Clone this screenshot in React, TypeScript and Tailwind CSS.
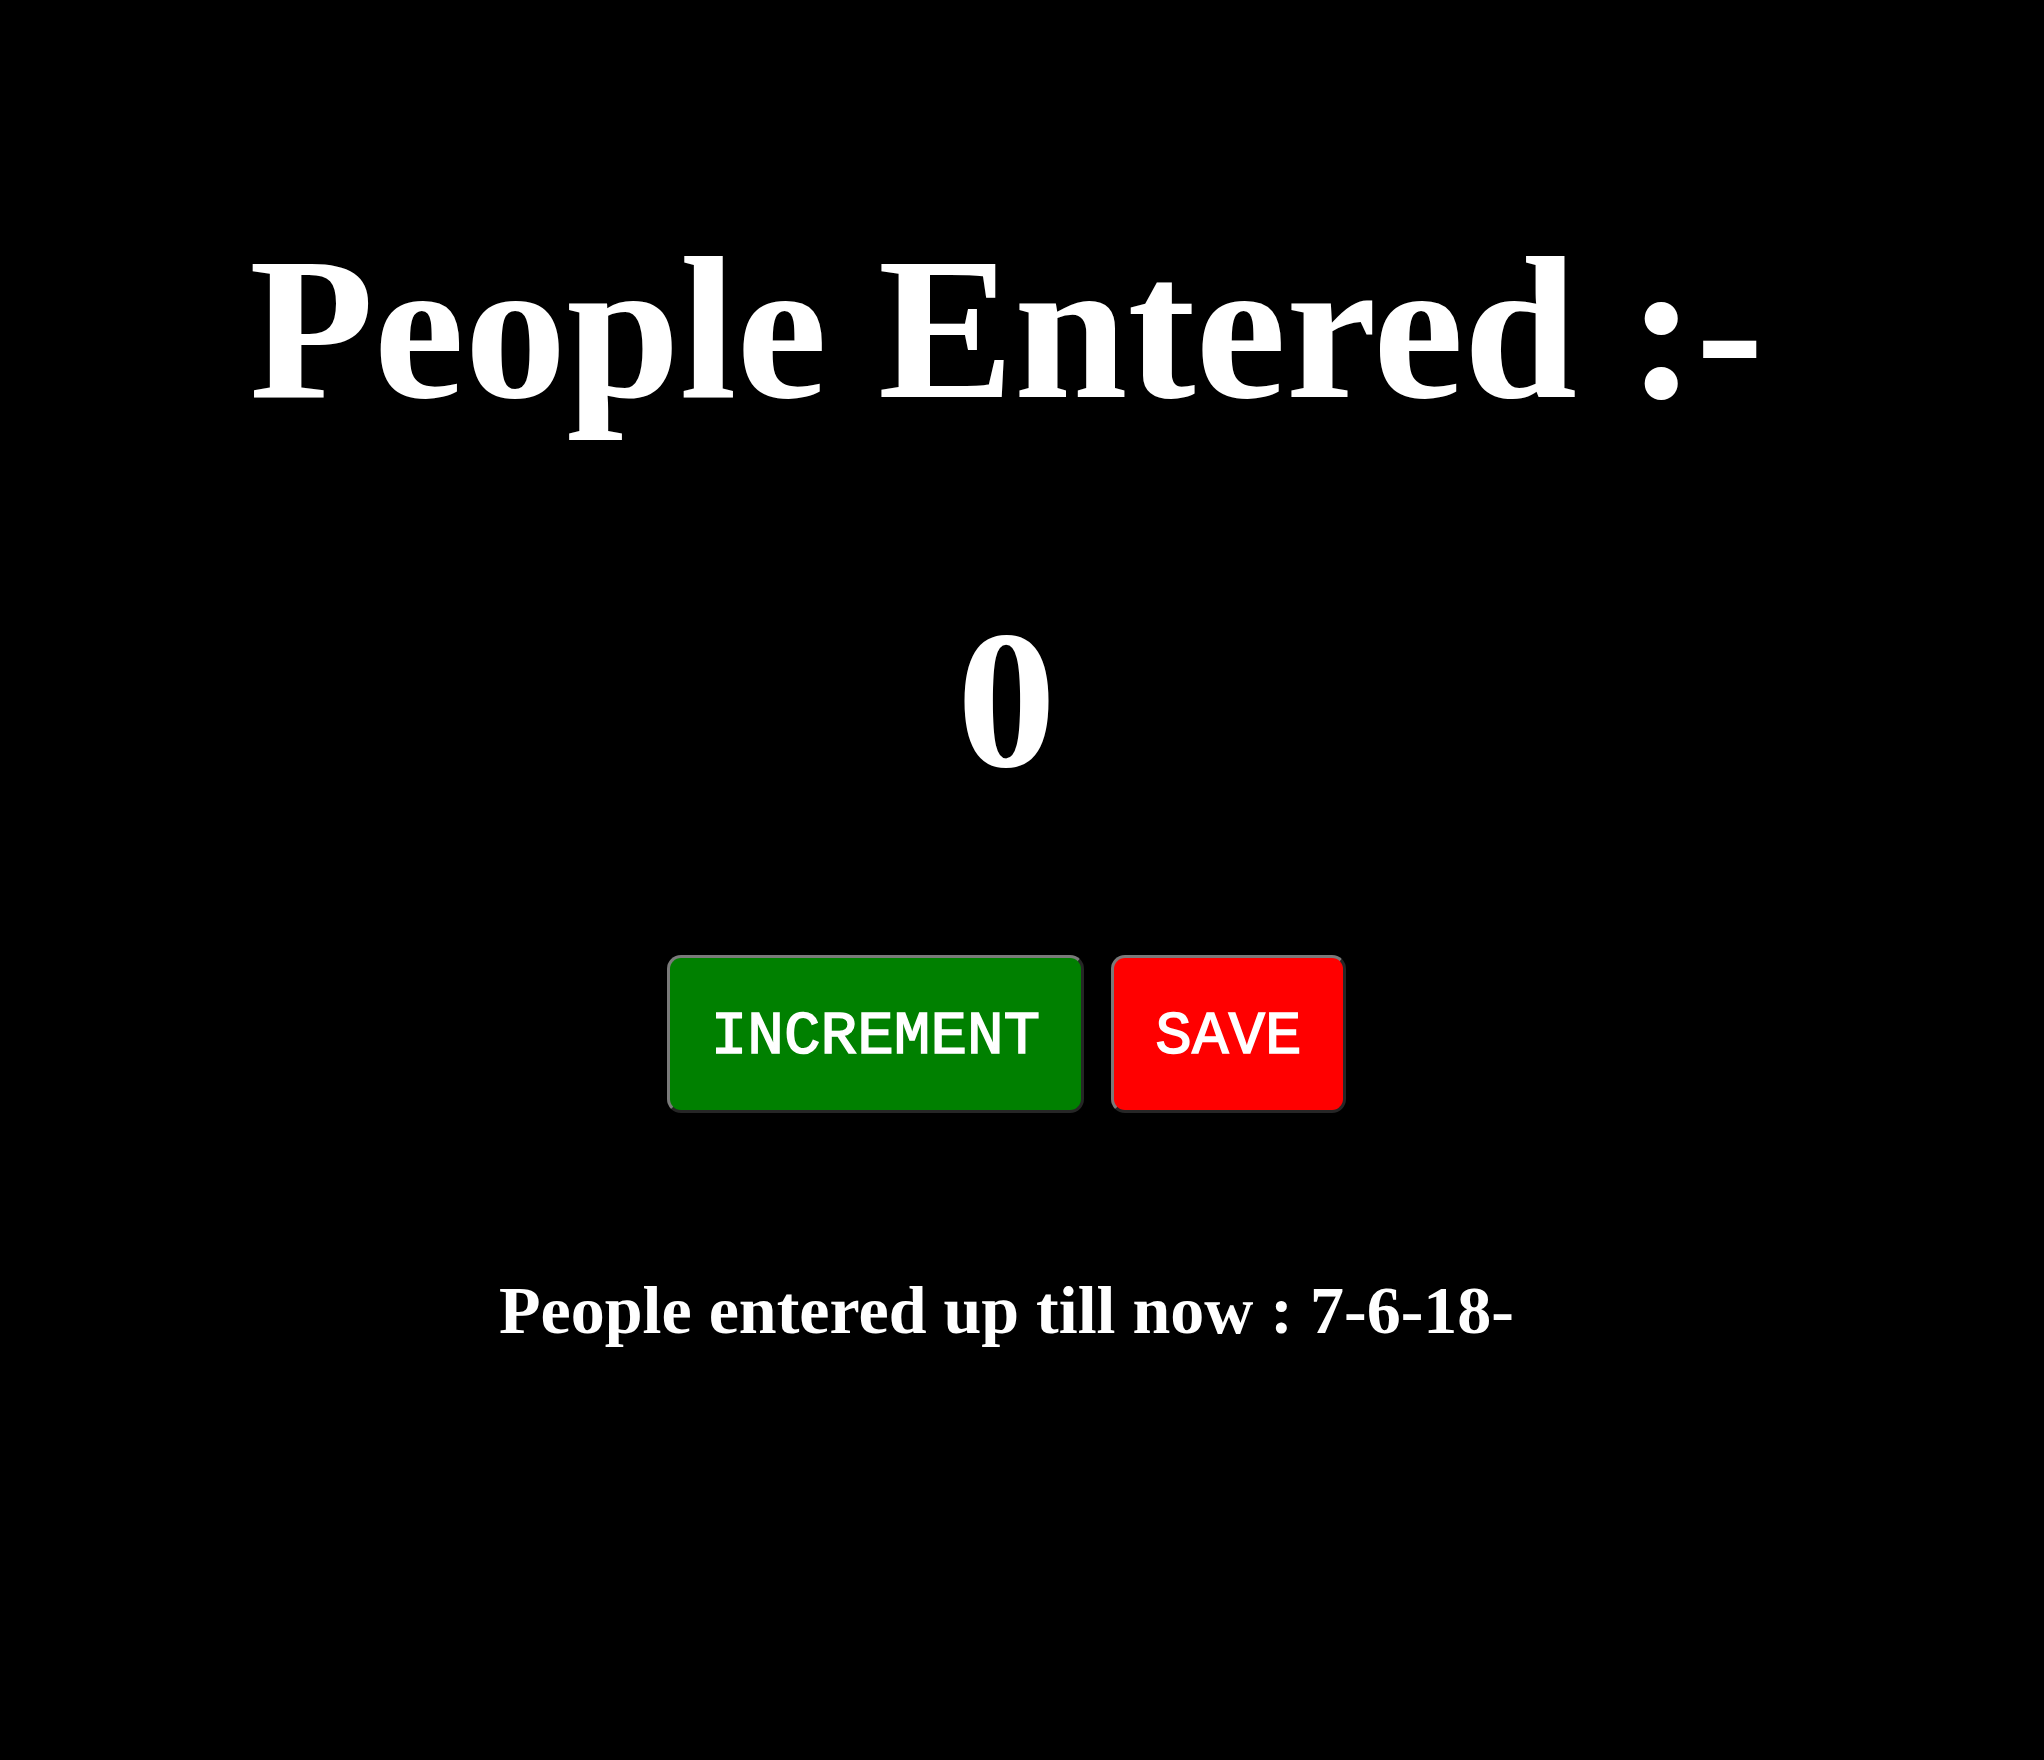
import React from "react";

export default function App() {
  return (
    <div className="min-h-[1760px] w-full bg-black text-white flex flex-col items-center pr-[31px]">
      <h1 className="mt-[226px] text-[204px] leading-none font-bold font-['Liberation_Serif',serif] whitespace-nowrap">
        People Entered :-
      </h1>
      <div className="mt-[171px] text-[198px] leading-none font-bold font-['Liberation_Serif',serif]">
        0
      </div>
      <div className="mt-[156px] flex gap-[27px]">
        <button className="h-[158px] w-[417px] rounded-[14px] border-[3px] border-t-[#7a7a7a] border-l-[#7a7a7a] border-b-[#262626] border-r-[#262626] bg-[#008000] text-white text-[61px] font-normal [-webkit-text-stroke:1.5px_white] font-['Liberation_Mono',monospace] leading-none pt-[4px]">
          INCREMENT
        </button>
        <button className="h-[158px] w-[235px] rounded-[14px] border-[3px] border-t-[#7a7a7a] border-l-[#7a7a7a] border-b-[#262626] border-r-[#262626] bg-[#ff0000] text-white text-[61px] font-normal [-webkit-text-stroke:1.5px_white] font-['Liberation_Mono',monospace] leading-none pt-[4px]">
          SAVE
        </button>
      </div>
      <div className="mt-[163px] text-[68px] leading-none font-bold font-['Liberation_Serif',serif] whitespace-nowrap">
        People entered up till now : 7-6-18-
      </div>
    </div>
  );
}
